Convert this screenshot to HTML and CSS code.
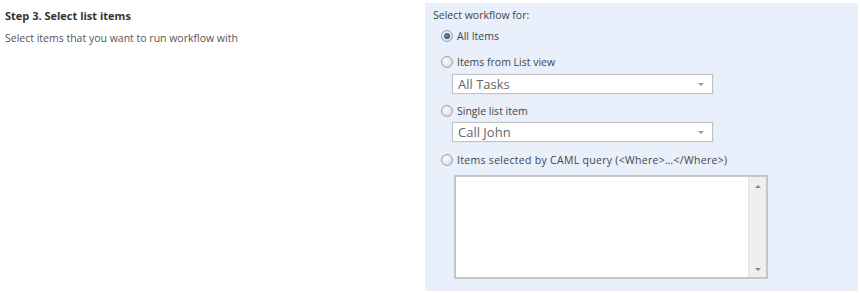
FILE: index.html
```html
<!DOCTYPE html>
<html>
<head>
    <title>Step 3. Select list items</title>
    <meta charset="UTF-8">
    <link rel="stylesheet" href="styles.css">
</head>
<body>
    <div class="section">
        <div class="section-info">
            <h3 class="section-title">Step 3. Select list items</h3>
            <p class="section-desc">Select items that you want to run workflow with</p>
        </div>
        <div class="section-panel">
            <div class="panel-label">Select workflow for:</div>

            <label class="option option-first">
                <span class="radio checked"></span>
                <span>All Items</span>
            </label>

            <label class="option option-view">
                <span class="radio"></span>
                <span>Items from List view</span>
            </label>
            <div class="dropdown dropdown-view">
                <span class="dropdown-text">All Tasks</span>
                <span class="dropdown-arrow"></span>
            </div>

            <label class="option option-single">
                <span class="radio"></span>
                <span>Single list item</span>
            </label>
            <div class="dropdown">
                <span class="dropdown-text">Call John</span>
                <span class="dropdown-arrow"></span>
            </div>

            <label class="option option-caml">
                <span class="radio"></span>
                <span class="caml-label">Items selected by CAML query (&lt;Where&gt;…&lt;/Where&gt;)</span>
            </label>
            <div class="query-box">
                <div class="query-text"></div>
                <div class="scrollbar">
                    <span class="scroll-up"></span>
                    <span class="scroll-down"></span>
                </div>
            </div>
        </div>
    </div>
</body>
</html>
```

FILE: styles.css
```css
body {
    margin: 0;
    background-color: white;
    font-family: "Open Sans", "Liberation Sans", sans-serif;
    font-size: 10.5px;
    color: #444;
}
.section {
    display: flex;
    height: 293px;
}
.section-info {
    width: 420px;
    padding: 6px 0 0 5px;
}
.section-title {
    margin: 0;
    font-size: 11px;
    font-weight: bold;
    line-height: 20px;
    color: #333;
}
.section-desc {
    margin: 2px 0 0 0;
    line-height: 20px;
    color: #555;
}
.section-panel {
    flex: 1;
    margin: 3px 2px 2px 0;
    padding: 2px 0 0 8px;
    background-color: #e9f0fb;
}
.panel-label {
    line-height: 20px;
    color: #444;
}
.option {
    display: flex;
    align-items: center;
    gap: 4px;
    height: 22px;
    margin-left: 8px;
    color: #444;
}
.option-view {
    margin-top: 4px;
}
.option-single {
    margin-top: 6px;
}
.option-caml {
    margin-top: 7px;
}
.caml-label {
    letter-spacing: 0.3px;
}
.radio {
    width: 10px;
    height: 10px;
    border: 1px solid #a0a0a0;
    border-radius: 50%;
    background: radial-gradient(circle at 40% 40%, #ffffff, #d0d0d0);
    box-sizing: content-box;
    position: relative;
}
.radio.checked::after {
    content: "";
    position: absolute;
    left: 2px;
    top: 2px;
    width: 6px;
    height: 6px;
    border-radius: 50%;
    background: radial-gradient(circle at 40% 40%, #5d88c0, #1a437c);
}
.dropdown {
    display: flex;
    align-items: center;
    justify-content: space-between;
    width: 246px;
    height: 18px;
    margin-left: 19px;
    padding: 0 8px 0 5px;
    background-color: white;
    border: 1px solid #c2c2c2;
    box-shadow: 0 0 1px rgba(0,0,0,0.15);
}
.dropdown-view {
    margin-top: 1px;
}
.dropdown-text {
    font-size: 13px;
    color: #666;
}
.dropdown-arrow {
    width: 0;
    height: 0;
    border-left: 3px solid transparent;
    border-right: 3px solid transparent;
    border-top: 3px solid #999;
}
.query-box {
    display: flex;
    width: 310px;
    height: 100px;
    margin: 4px 0 0 21px;
    background-color: white;
    border: 2px solid #c6c6c6;
}
.query-text {
    flex: 1;
}
.scrollbar {
    width: 17px;
    background-color: #efefef;
    border-left: 1px solid #e2e2e2;
    display: flex;
    flex-direction: column;
    justify-content: space-between;
    align-items: center;
    padding: 8px 0 6px 0;
}
.scroll-up {
    width: 0;
    height: 0;
    border-left: 3px solid transparent;
    border-right: 3px solid transparent;
    border-bottom: 3px solid #888;
}
.scroll-down {
    width: 0;
    height: 0;
    border-left: 3px solid transparent;
    border-right: 3px solid transparent;
    border-top: 3px solid #888;
}
```
